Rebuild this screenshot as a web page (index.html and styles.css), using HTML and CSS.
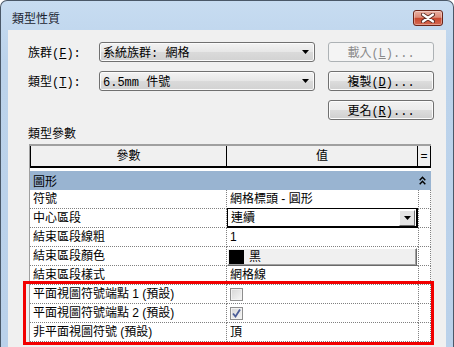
FILE: index.html
```html
<!DOCTYPE html>
<html lang="zh-Hant">
<head>
  <meta charset="UTF-8">
  <title>類型性質</title>
  <link rel="stylesheet" href="styles.css">
</head>
<body>

  <div class="window">
    <div class="titlebar">
      <span class="title">類型性質</span>
      <button class="close" aria-label="關閉">
        <svg width="14" height="10" viewBox="0 0 14 10">
          <path d="M2 1.5 L12 8.5 M12 1.5 L2 8.5" stroke="#5a2a22" stroke-width="4" stroke-linecap="round"/>
          <path d="M2 1.5 L12 8.5 M12 1.5 L2 8.5" stroke="#fff" stroke-width="2.2" stroke-linecap="round"/>
        </svg>
      </button>
    </div>

    <div class="client">
      <div class="form">
        <div class="form-row">
          <span class="label">族群(<u>F</u>):</span>
          <div class="combo">
            <span>系統族群: 網格</span>
            <svg class="arrow" width="7" height="4" viewBox="0 0 7 4"><polygon points="0,0 7,0 3.5,4" fill="#000"/></svg>
          </div>
          <button class="btn" disabled>載入(<u>L</u>)...</button>
        </div>
        <div class="form-row">
          <span class="label">類型(<u>T</u>):</span>
          <div class="combo">
            <span>6.5mm 件號</span>
            <svg class="arrow" width="7" height="4" viewBox="0 0 7 4"><polygon points="0,0 7,0 3.5,4" fill="#000"/></svg>
          </div>
          <button class="btn">複製(<u>D</u>)...</button>
        </div>
        <div class="form-row">
          <button class="btn">更名(<u>R</u>)...</button>
        </div>
      </div>

      <div class="section-label">類型參數</div>

      <div class="props">
        <div class="head">參數</div>
        <div class="head">值</div>
        <div class="head head-eq">=</div>

        <div class="gap"></div>

        <div class="group">
          <span>圖形</span>
          <svg width="7" height="9" viewBox="0 0 7 9">
            <polyline points="0.7,4.3 3.5,1.2 6.3,4.3" fill="none" stroke="#000" stroke-width="1.4"/>
            <polyline points="0.7,8.3 3.5,5.2 6.3,8.3" fill="none" stroke="#000" stroke-width="1.4"/>
          </svg>
        </div>

        <div class="name">符號</div>
        <div class="value">網格標頭 - 圓形</div>
        <div class="eq"></div>

        <div class="name">中心區段</div>
        <div class="value ctrl">
          <div class="cell-combo">
            <span>連續</span>
            <span class="drop">
              <svg width="7" height="4" viewBox="0 0 7 4"><polygon points="0,0 7,0 3.5,4" fill="#000"/></svg>
            </span>
          </div>
        </div>
        <div class="eq"></div>

        <div class="name">結束區段線粗</div>
        <div class="value">1</div>
        <div class="eq"></div>

        <div class="name">結束區段顏色</div>
        <div class="value ctrl">
          <div class="color-btn"><span class="swatch"></span>黑</div>
        </div>
        <div class="eq"></div>

        <div class="name">結束區段樣式</div>
        <div class="value">網格線</div>
        <div class="eq"></div>

        <div class="name">平面視圖符號端點 1 (預設)</div>
        <div class="value"><span class="check"></span></div>
        <div class="eq"></div>

        <div class="name">平面視圖符號端點 2 (預設)</div>
        <div class="value">
          <span class="check">
            <svg width="11" height="11" viewBox="0 0 11 11"><path d="M2 5.5 L4.5 8.5 L9 1.5" fill="none" stroke="#4b5d98" stroke-width="1.8"/></svg>
          </span>
        </div>
        <div class="eq"></div>

        <div class="name">非平面視圖符號 (預設)</div>
        <div class="value">頂</div>
        <div class="eq"></div>
      </div>

      <div class="highlight"></div>
    </div>
  </div>

</body>
</html>
```

FILE: styles.css
```css
* {
  box-sizing: border-box;
}

body {
  margin: 0;
  background: #fff;
  font-family: "Liberation Mono", "Noto Sans CJK TC", monospace;
  font-size: 12px;
  color: #000;
}

.window {
  width: 454px;
  height: 347px;
  overflow: hidden;
  display: flex;
  flex-direction: column;
  padding: 0 7px;
  background: linear-gradient(#c7dcf1, #bcd3eb 60px, #bad1ea);
  border: 1px solid #4a5868;
  border-bottom: none;
  border-radius: 7px 7px 0 0;
}

.titlebar {
  height: 29px;
  flex: none;
  display: flex;
  align-items: flex-start;
  justify-content: space-between;
  padding: 0 3px 0 4px;
}

.title {
  margin-top: 8px;
  line-height: 18px;
  font-family: "Noto Sans CJK TC", sans-serif;
  color: #1b2430;
}

.close {
  margin-top: 9px;
  width: 30px;
  height: 16px;
  padding: 0;
  display: flex;
  align-items: center;
  justify-content: center;
  border: 1px solid #6a2418;
  border-radius: 3px;
  background: linear-gradient(#eab0a2 0%, #dd8c79 45%, #c8472e 52%, #d66a52 100%);
  box-shadow: inset 0 0 0 1px rgba(255, 255, 255, 0.35);
}

.client {
  flex: 1;
  position: relative;
  background: #f0f0f0;
}

/* top form */
.form {
  display: flex;
  flex-direction: column;
  gap: 9px;
  padding: 12px 12px 0 20px;
}

.form-row {
  display: flex;
  align-items: center;
  height: 20px;
}

.label {
  width: 71px;
}

.combo {
  width: 216px;
  height: 20px;
  display: flex;
  align-items: center;
  justify-content: space-between;
  padding: 0 5px 0 3px;
  border: 1px solid #707070;
  border-radius: 3px;
  background: linear-gradient(#f3f3f3, #e6e6e6 50%, #dadada 51%, #d2d2d2);
  box-shadow: inset 0 0 0 1px #fbfbfb;
}

.btn {
  margin-left: auto;
  width: 106px;
  height: 20px;
  padding: 0;
  font: inherit;
  color: #000;
  border: 1px solid #707070;
  border-radius: 3px;
  background: linear-gradient(#f2f2f2, #ebebeb 50%, #dddddd 51%, #cfcfcf);
  box-shadow: inset 0 0 0 1px #fcfcfc;
}

.btn:disabled {
  color: #8a8a8a;
  border-color: #adb2b5;
  background: #f4f4f4;
  box-shadow: none;
}

.section-label {
  margin: 5px 0 0 20px;
  line-height: 16px;
  font-family: "Noto Sans CJK TC", sans-serif;
}

/* properties table */
.props {
  margin: 3px 0 0 21px;
  width: 402px;
  display: grid;
  grid-template-columns: 197px 191px 13px;
  background: #fff;
  border-top: 2px solid #a0a0a0;
  border-left: 1px solid #a0a0a0;
  font-family: "Liberation Sans", "Noto Sans CJK TC", sans-serif;
}

.head {
  height: 22px;
  line-height: 20px;
  text-align: center;
  background: #f0f0f0;
  border-bottom: 2px solid #000;
  border-right: 1px solid #000;
}

.head:first-child {
  border-left: 1px solid #000;
}

.gap {
  grid-column: 1 / -1;
  height: 3px;
}

.group {
  grid-column: 1 / -1;
  height: 19px;
  display: flex;
  align-items: center;
  justify-content: space-between;
  padding: 0 5px 0 3px;
  background: #99b4d1;
}

.name,
.value,
.eq {
  height: 19px;
  line-height: 18px;
  border-bottom: 1px dotted #808080;
  white-space: nowrap;
}

.name {
  padding-left: 3px;
  border-right: 1px dotted #808080;
}

.value {
  padding-left: 3px;
  display: flex;
  align-items: center;
}

.value.ctrl {
  padding-left: 0;
  align-items: flex-start;
}

.eq {
  border-left: 1px dotted #808080;
  border-right: 1px dotted #808080;
}

.cell-combo {
  width: 191px;
  height: 20px;
  margin-top: -1px;
  display: flex;
  align-items: center;
  justify-content: space-between;
  padding: 0 1px 0 3px;
  background: #fff;
  border: 1px solid #000;
  border-bottom-width: 2px;
  border-right-width: 2px;
}

.drop {
  width: 16px;
  height: 16px;
  display: flex;
  align-items: center;
  justify-content: center;
  background: #e4e4e4;
  border: 1px solid;
  border-color: #fff #6d6d6d #6d6d6d #fff;
}

.color-btn {
  width: 190px;
  height: 18px;
  margin-top: 1px;
  display: flex;
  align-items: center;
  gap: 5px;
  padding-left: 1px;
  background: #f0f0f0;
  border: 1px solid;
  border-color: #fff #696969 #696969 #fff;
  box-shadow: inset -1px -1px 0 #a0a0a0;
}

.swatch {
  width: 15px;
  height: 14px;
  background: #000;
}

.check {
  width: 13px;
  height: 13px;
  display: flex;
  align-items: center;
  justify-content: center;
  border: 1px solid #8e8e8e;
  background: linear-gradient(135deg, #d6d6d6, #f6f6f6);
  box-shadow: inset 0 0 0 1px #f2f2f2;
}

/* annotation frame drawn over the last three rows */
.highlight {
  position: absolute;
  left: 15px;
  top: 251px;
  width: 411px;
  height: 64px;
  border: 3px solid #f20000;
}
```
